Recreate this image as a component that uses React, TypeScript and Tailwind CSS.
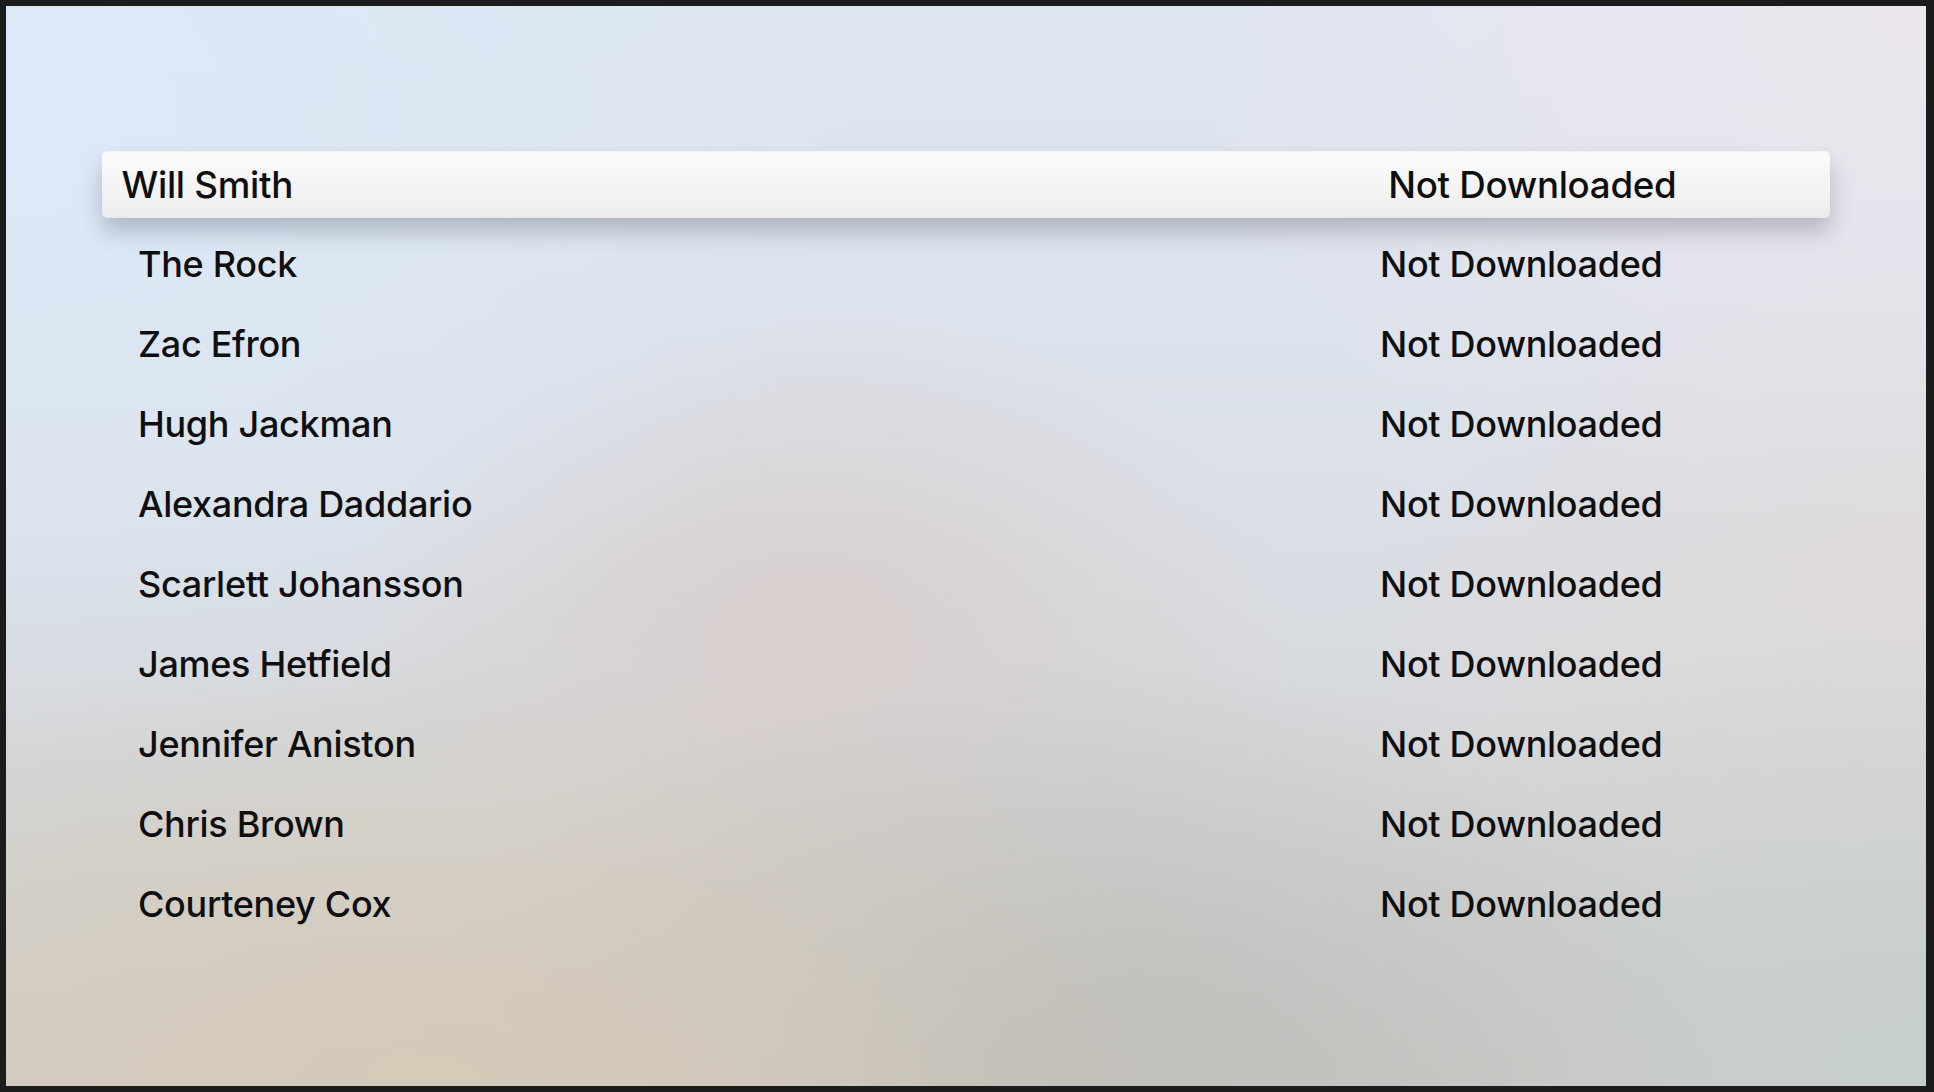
import React from "react";

const names = [
  "Will Smith",
  "The Rock",
  "Zac Efron",
  "Hugh Jackman",
  "Alexandra Daddario",
  "Scarlett Johansson",
  "James Hetfield",
  "Jennifer Aniston",
  "Chris Brown",
  "Courteney Cox",
];

export default function App() {
  return (
    <div className="w-[1934px] h-[1092px] bg-[#1c1c1c] pt-[6px] pl-[6px] pr-[8px] pb-[6px] overflow-hidden">
      <div className="relative h-full w-full overflow-hidden bg-[radial-gradient(45%_60%_at_0%_10%,#dce9f8_0%,transparent_100%),radial-gradient(40%_50%_at_100%_0%,#ebe6ec_0%,transparent_100%),radial-gradient(45%_40%_at_22%_100%,#d6cab8_0%,transparent_100%),radial-gradient(35%_40%_at_55%_100%,#bcbcba_0%,transparent_100%),radial-gradient(35%_45%_at_100%_100%,#c6cfcb_0%,transparent_100%),radial-gradient(25%_30%_at_42%_58%,#d9cfcd_0%,transparent_100%),radial-gradient(30%_35%_at_100%_55%,#e0dadb_0%,transparent_100%),linear-gradient(180deg,#dfe6f2_0%,#dbe0e8_45%,#cdcbc6_100%)] font-['Inter',_'Liberation_Sans',_sans-serif] font-medium text-[#0f0f0f]">
        <div className="pt-[139px] pl-[113px] pr-[113px]">
          {names.map((n, i) =>
            i === 0 ? (
              <div key={n} className="h-[79px] flex items-center">
                <div className="w-full h-[65px] flex items-center scale-[1.02] rounded-[5px] bg-[linear-gradient(180deg,#fbfbfb_0%,#f3f3f4_60%,#ececed_100%)] shadow-[0_14px_22px_rgba(60,65,80,0.28)]">
                  <span className="pl-[19px] w-[1261px] text-[36px] leading-none tracking-[-0.3px]">{n}</span>
                  <span className="text-[36px] leading-none tracking-[-0.3px]">Not Downloaded</span>
                </div>
              </div>
            ) : (
              <div key={n} className="h-[80px] flex items-center">
                <div className="w-full h-[65px] flex items-center">
                  <span className="pl-[19px] w-[1261px] text-[36px] leading-none tracking-[-0.3px]">{n}</span>
                  <span className="text-[36px] leading-none tracking-[-0.3px]">Not Downloaded</span>
                </div>
              </div>
            )
          )}
        </div>
      </div>
    </div>
  );
}
